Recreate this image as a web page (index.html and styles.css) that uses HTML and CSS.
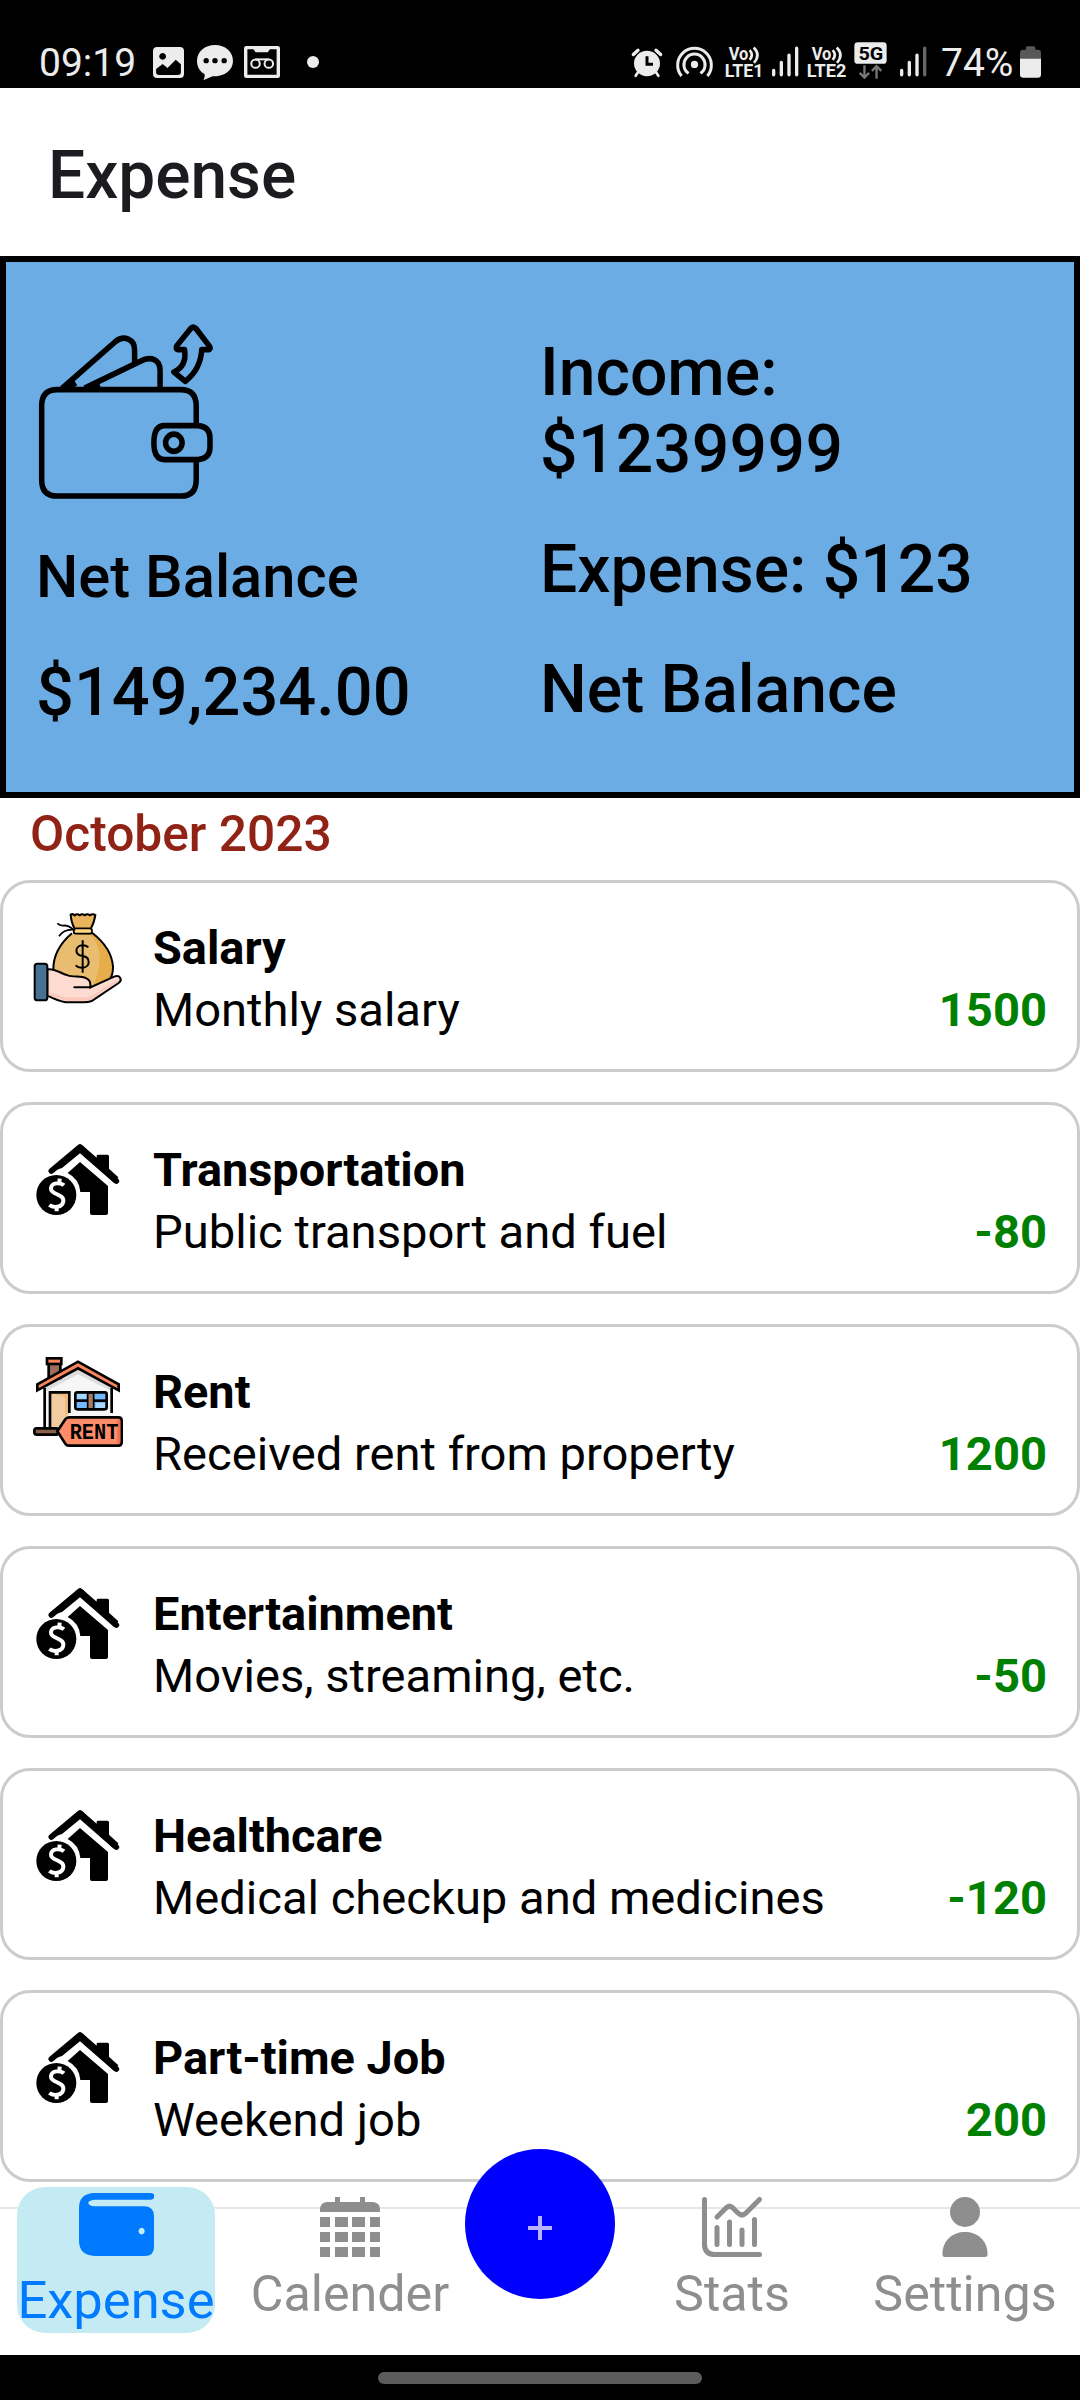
FILE: index.html
```html
<!DOCTYPE html>
<html lang="en">
<head>
<meta charset="utf-8">
<title>Expense</title>
<link rel="stylesheet" href="styles.css">
</head>
<body>
<svg class="defs" width="0" height="0" aria-hidden="true">
  <symbol id="house" viewBox="99 105 270 270">
    <path d="M154 213 L240 141 L349 243" fill="none" stroke="#000" stroke-width="17" stroke-linecap="round" stroke-linejoin="round"/>
    <path d="M147 216 L236 136 Q241 132 247 136 L290 173 V168 Q290 164 295 164 H322 Q327 164 327 169 V206 L355 232 L343 250 L240 160 L186 204 Q164 212 147 216Z"/>
    <path d="M203 219 L240 186 L324 258 V339 Q324 345 318 345 H276 Q270 345 270 339 V276 H241 Q238 237 203 219Z"/>
    <ellipse cx="169" cy="285" rx="60" ry="60"/>
    <path d="M192 256 C181 246 153 247 153 266 C153 285 192 281 190 303 C188 325 158 323 148 315 M179 236 L178 248 M170 322 L170 334" fill="none" stroke="#fff" stroke-width="12"/>
  </symbol>
</svg>

<header class="status">
  <span class="clock">09:19</span>
  <svg class="st-image" viewBox="444 141 90 93" preserveAspectRatio="none"><path fill="#ececec" fill-rule="evenodd" d="M456 141H522Q534 141 534 153V222Q534 234 522 234H456Q444 234 444 222V153Q444 141 456 141ZM453 207V219Q454 225 462 225H516Q525 225 525 217V193L510 179L486 204L472 192ZM472 159a10 10 0 1 0 .1 0Z"/></svg>
  <svg class="st-chat" viewBox="572 135 106 105" preserveAspectRatio="none"><path fill="#ececec" d="M625 135C655 135 678 155 678 182C678 210 655 229 618 229L592 240C590 239 597 232 594 222C580 214 572 200 572 182C572 155 595 135 625 135Z"/><circle cx="599" cy="182" r="8"/><circle cx="625" cy="182" r="8"/><circle cx="652" cy="182" r="8"/></svg>
  <svg class="st-tape" viewBox="709 139 106 96" preserveAspectRatio="none"><g fill="none" stroke="#ececec"><rect x="714" y="144" width="96" height="86" rx="2" stroke-width="10"/><circle cx="743" cy="192" r="12.500" stroke-width="6"/><circle cx="782" cy="192" r="12.500" stroke-width="6"/><path d="M743 179H782" stroke-width="6"/></g><path fill="#ececec" d="M736 147H786L779 158H743Z"/></svg>
  <i class="dot"></i>
  <div class="status-right">
    <svg class="st-alarm" viewBox="95 83 90 86"><ellipse cx="140" cy="129" rx="39" ry="38" fill="#ececec"/><path d="M99 102L113 89M181 102L167 89" stroke="#ececec" stroke-width="10" stroke-linecap="round"/><path d="M112 157L106 166M168 157L174 166" stroke="#ececec" stroke-width="8" stroke-linecap="round"/><path d="M140 107V131H158" fill="none" stroke="#000" stroke-width="9"/></svg>
    <svg class="st-hotspot" viewBox="226 74 112 98"><circle cx="282" cy="132" r="11" fill="#ececec"/><path d="M264 159A32 32 0 1 1 300 159M243 167A51 51 0 1 1 321 167" fill="none" stroke="#ececec" stroke-width="9"/></svg>
    <svg class="st-volte" viewBox="374 78 120 98"><g fill="#ececec" font-family="Roboto" font-weight="700"><text x="385" y="121" font-size="54" textLength="59" lengthAdjust="spacingAndGlyphs">Vo</text><text x="373" y="172" font-size="53" textLength="116" lengthAdjust="spacingAndGlyphs">LTE1</text></g><path d="M448 90Q461 104 448 119M460 82Q482 104 461 128" fill="none" stroke="#ececec" stroke-width="8"/></svg>
    <svg class="st-signal" viewBox="514 78 84 92"><path d="M522 151V164M545 127V164M568 105V164M591 84V164" stroke="#ececec" stroke-width="10" stroke-linecap="round"/></svg>
    <svg class="st-volte2" viewBox="623 78 120 98"><g fill="#ececec" font-family="Roboto" font-weight="700"><text x="637" y="121" font-size="54" textLength="59" lengthAdjust="spacingAndGlyphs">Vo</text><text x="622" y="172" font-size="53" textLength="119" lengthAdjust="spacingAndGlyphs">LTE2</text></g><path d="M700 90Q713 104 700 119M712 82Q734 104 713 128" fill="none" stroke="#ececec" stroke-width="8"/></svg>
    <svg class="st-5g" viewBox="764 65 98 113"><rect x="765" y="66" width="96" height="64" rx="10" fill="#ececec"/><text x="777" y="119" font-family="Roboto" font-weight="700" font-size="57" textLength="74" lengthAdjust="spacingAndGlyphs">5G</text><path d="M795 134V170M781 157L795 171L809 157M831 174V138M817 151L831 137L845 151" fill="none" stroke="#777" stroke-width="7"/></svg>
    <svg class="st-signal2" viewBox="898 78 84 92"><path d="M906 151V164M929 127V164M952 105V164" stroke="#ececec" stroke-width="10" stroke-linecap="round"/><path d="M975 84V164" stroke="#666" stroke-width="10" stroke-linecap="round"/></svg>
    <span class="percent">74%</span>
    <svg class="st-battery" viewBox="1260 79 63 95"><path fill="#585858" d="M1278 84Q1278 79 1283 79H1301Q1306 79 1306 84V90H1314Q1323 90 1323 99V120H1260V99Q1260 90 1269 90H1278Z"/><path fill="#ececec" d="M1260 117H1323V164Q1323 174 1313 174H1270Q1260 174 1260 164Z"/></svg>
  </div>
</header>

<h1 class="title">Expense</h1>

<section class="summary">
  <div class="col">
    <svg class="wallet" viewBox="104.500 199 523 504" preserveAspectRatio="none"><g fill="none" stroke="#000" stroke-width="16" stroke-linejoin="round">
      <path d="M570 490V436Q570 391 525 391H166Q121 391 121 436V644Q121 689 166 689H525Q570 689 570 644V592"/>
      <path d="M478 492H576Q610 495 610 527V553Q610 583 576 587H478Q447 587 447 540Q447 492 478 492Z"/>
      <circle cx="505" cy="540" r="24"/>
      <path d="M180 388L336 256C360 238 391 250 391 280V316M246 387L407 312C438 296 465 307 465 337V388M196 388L220 372M262 388L290 378"/>
      <path d="M555 219L513 269Q510 277 516 279H536Q544 325 505 342L538 368Q583 334 586 279H608Q613 276 608 269L570 221Q562 213 555 219Z"/>
    </g></svg>
    <p class="label">Net Balance</p>
    <p class="total">$149,234.00</p>
  </div>
  <div class="col figures">
    <p>Income: <span class="sum">$1239999</span></p>
    <p>Expense: $123</p>
    <p>Net Balance</p>
  </div>
</section>

<h2 class="month">October 2023</h2>

<main class="list">
  <article class="card">
    <svg class="icon" viewBox="39 39 270 270">
      <path d="M161 99L218 100Q275 145 279 200Q279 226 268 240L213 272L100 210Q99 148 161 99Z" fill="#e9bd70"/>
      <path d="M205 100C246 134 250 190 218 262L268 240C282 215 281 150 218 100Z" fill="#e7ad49"/>
      <path d="M152 44L226 44L213 84H163Z" fill="#e9b45c"/>
      <path d="M161 99L218 100Q275 145 279 200Q279 226 268 240M100 210Q99 148 156 100" fill="none" stroke="#000" stroke-width="6"/>
      <path d="M163 84Q154 68 152 44Q159 40 164 46Q172 40 179 46Q187 40 194 46Q202 40 209 46Q218 40 226 45Q222 69 213 84" fill="none" stroke="#000" stroke-width="6"/>
      <rect x="161" y="85" width="55" height="16" rx="7" fill="#ffda80" stroke="#000" stroke-width="5"/>
      <path d="M112 70Q121 79 135 76Q148 77 160 89Q132 87 117 109" fill="none" stroke="#000" stroke-width="5"/>
      <path d="M205 142Q199 136 188 136C163 137 163 165 188 168C213 172 211 202 188 203Q174 204 167 196M188 121V218" fill="none" stroke="#000" stroke-width="6"/>
      <path d="M82 208C105 204 120 220 143 226C168 234 210 223 211 253V262L284 229C299 224 309 239 296 249L215 303Q205 307 190 307H137Q115 303 82 287Z" fill="#fddbd0" stroke="#000" stroke-width="6"/>
      <path d="M86 276L136 292H190Q208 292 225 281L290 241L292 246L211 300Q200 303 139 303L86 285Z" fill="#fcc9bd"/>
      <path d="M163 262H211" stroke="#000" stroke-width="6" stroke-linecap="round"/>
      <rect x="44" y="191" width="38" height="110" rx="8" fill="#477193" stroke="#000" stroke-width="6"/>
    </svg>
    <div class="text"><h3>Salary</h3><p>Monthly salary</p></div><b class="amount">1500</b>
  </article>
  <article class="card">
    <svg class="icon"><use href="#house"/></svg>
    <div class="text"><h3>Transportation</h3><p>Public transport and fuel</p></div><b class="amount">-80</b>
  </article>
  <article class="card">
    <svg class="icon" viewBox="99 111 270 270">
      <path d="M134 202L234 149L335 202V334H134Z" fill="#f6f6f6"/>
      <path d="M134 202L234 149L335 202V214L234 163L134 216Z" fill="#ddd"/>
      <path d="M134 204V325M335 204V279" stroke="#000" stroke-width="8"/>
      <rect x="146" y="130" width="35" height="44" fill="#9c6d58" stroke="#000" stroke-width="8"/>
      <path d="M112 193L234 125L356 193V211L234 145L112 211Z" fill="#f9855c" stroke="#000" stroke-width="8"/>
      <rect x="141" y="115" width="43" height="17" fill="#f9855c" stroke="#000" stroke-width="8"/>
      <path d="M150 325V217H208V279L180 325Z" fill="#f2cca0"/><path d="M170 221H204V278L196 290V240Q194 224 170 225Z" fill="#efb878"/>
      <path d="M150 325V217H208V279" fill="none" stroke="#000" stroke-width="8"/>
      <rect x="226" y="217" width="94" height="51" rx="6" fill="#70b8ff"/><path d="M230 221h28v15h-28zM287 248h28v16h-28z" fill="#a5d7ff"/><path d="M226 242H320" stroke="#000" stroke-width="8"/><rect x="263" y="218" width="18" height="50" fill="#a77b61" stroke="#000" stroke-width="5"/><rect x="226" y="217" width="94" height="51" rx="6" fill="none" stroke="#000" stroke-width="8"/>
      <rect x="103" y="325" width="72" height="19" rx="7" fill="#88614d" stroke="#000" stroke-width="8"/>
      <path d="M172 334L196 298Q200 292 207 292H355Q365 292 365 302V367Q365 377 355 377H207Q200 377 196 371Z" fill="#ff8d69" stroke="#000" stroke-width="8"/>
      <path d="M352 296H356Q361 297 361 303V366Q361 373 352 373Z" fill="#ee7050"/>
      <text x="209" y="356" font-family="Liberation Mono, monospace" font-weight="700" font-size="64" textLength="146" lengthAdjust="spacingAndGlyphs">RENT</text>
    </svg>
    <div class="text"><h3>Rent</h3><p>Received rent from property</p></div><b class="amount">1200</b>
  </article>
  <article class="card">
    <svg class="icon"><use href="#house"/></svg>
    <div class="text"><h3>Entertainment</h3><p>Movies, streaming, etc.</p></div><b class="amount">-50</b>
  </article>
  <article class="card">
    <svg class="icon"><use href="#house"/></svg>
    <div class="text"><h3>Healthcare</h3><p>Medical checkup and medicines</p></div><b class="amount">-120</b>
  </article>
  <article class="card">
    <svg class="icon"><use href="#house"/></svg>
    <div class="text"><h3>Part-time Job</h3><p>Weekend job</p></div><b class="amount">200</b>
  </article>
</main>

<nav class="tabs">
  <a class="tab active">
    <svg class="ic-wallet" viewBox="229 188 218 190" preserveAspectRatio="none"><path fill="#007aff" fill-rule="evenodd" d="M274 188H438A9.500 10 0 0 1 438 208H274Q256 210 256 218Q257 227 274 228H420Q447 230 447 257V350Q447 378 420 378H275Q229 376 229 332V232Q229 190 274 188ZM411 293a9 10 0 1 0 .1 0Z"/></svg>
    <span>Expense</span>
  </a>
  <a class="tab">
    <svg class="ic" viewBox="0 0 60 60"><path fill="#8e8e8e" d="M15 0h5v5h20V0h5v5h8q7 1 7 7v3H0v-3q0-6 7-7h8zM0 20h10v10H0zM15 20h13v10H15zM32 20h13v10H32zM50 20h10v10H50zM0 35h10v10H0zM15 35h13v10H15zM32 35h13v10H32zM50 35h10v10H50zM0 50h10v10H0zM15 50h13v10H15zM32 50h13v10H32zM50 50h10v10H50z"/></svg>
    <span>Calender</span>
  </a>
  <a class="fab"><svg class="plus" viewBox="0 0 24 24"><path d="M12 0V24M0 12H24" stroke="#b8b3ff" stroke-width="4"/></svg></a>
  <a class="tab">
    <svg class="ic" viewBox="0 0 60 60"><path fill="none" stroke="#8e8e8e" stroke-width="5" stroke-linecap="round" d="M2.500 2.500V48Q3 57 12 57.500H57.500M15 30.500V47.500M27.500 25V47.500M40 33V47.500M52.500 22.500V47.500M15 20L24 11Q27.500 7.500 31 11L36 16Q40 20 44 16L57.500 2.500"/></svg>
    <span>Stats</span>
  </a>
  <a class="tab">
    <svg class="ic" viewBox="0 0 60 60"><g fill="#8e8e8e"><circle cx="30" cy="15" r="15"/><path d="M7.500 58V56C8 43 18 35 30 35S52 43 52.500 56V58Q52.500 60 50 60H10Q7.500 60 7.500 58Z"/></g></svg>
    <span>Settings</span>
  </a>
</nav>
<footer class="system"><i class="handle"></i></footer>
</body>
</html>
```
FILE: styles.css
```css
* { box-sizing: border-box; }
body {
  margin: 0;
  width: 1080px;
  height: 2400px;
  display: flex;
  flex-direction: column;
  overflow: hidden;
  background: #fff;
  color: #000;
  font-family: Roboto, sans-serif;
}
h1, h2, h3, p { margin: 0; font-weight: inherit; font-size: inherit; }
svg { display: block; flex: none; overflow: visible; }
.defs { display: none; }

.status {
  height: 88px;
  flex: none;
  display: flex;
  align-items: flex-start;
  padding: 42px 39px 0 39px;
  background: #000;
  color: #ececec;
}
.clock, .percent { font-size: 39px; line-height: 46px; margin-top: -2px; }
.clock { width: 114px; }
.st-image { width: 31px; height: 31px; margin-top: 5px; }
.st-chat { width: 36px; height: 35px; margin: 3px 0 0 13px; }
.st-tape { width: 36px; height: 32px; margin: 4px 0 0 11px; }
.dot { width: 12px; height: 12px; margin: 14px 0 0 27px; border-radius: 50%; background: #ececec; }
.status-right { display: flex; align-items: flex-start; margin-left: auto; }
.st-alarm { width: 30px; height: 29px; margin: 6px 14px 0 0; }
.st-hotspot { width: 37px; height: 33px; margin: 3px 12px 0 0; }
.st-volte { width: 40px; height: 33px; margin: 4px 6px 0 0; }
.st-signal { width: 28px; height: 31px; margin: 4px 8px 0 0; }
.st-volte2 { width: 40px; height: 33px; margin: 4px 7px 0 0; }
.st-5g { width: 33px; height: 38px; margin-right: 12px; }
.st-signal2 { width: 28px; height: 31px; margin: 4px 14px 0 0; }
.percent { width: 79px; }
.st-battery { width: 21px; height: 32px; margin-top: 4px; }

.title {
  height: 168px;
  flex: none;
  padding-left: 48px;
  font-size: 65.800px;
  font-weight: 500;
  line-height: 175px;
  color: #1c1b1f;
}

.summary {
  height: 542px;
  flex: none;
  display: grid;
  grid-template-columns: 1fr 1fr;
  padding: 0 30px;
  border: 6px solid #000;
  background: #6cace4;
  font-weight: 500;
}
.col { padding-top: 59px; }
.wallet { width: 180px; height: 180px; margin-bottom: 41px; }
.label { font-size: 59.700px; line-height: 70px; margin-bottom: 41px; }
.total { font-size: 66.700px; line-height: 78px; }
.figures { display: flex; flex-direction: column; gap: 43px; padding-top: 72px; font-size: 66px; line-height: 77px; }
.figures p { max-width: 450px; }
.sum { letter-spacing: 0.4px; }

.month {
  height: 82px;
  flex: none;
  padding-left: 30px;
  font-size: 49.700px;
  font-weight: 500;
  line-height: 73px;
  color: #902216;
}

.list { display: flex; flex-direction: column; gap: 30px; flex: 1; min-height: 0; }
.card {
  height: 192px;
  flex: none;
  display: flex;
  padding: 30px;
  border: 3px solid #ccc;
  border-radius: 30px;
  font-size: 47.150px;
  line-height: 63px;
}
.icon { width: 90px; height: 90px; margin-right: 30px; }
.text { flex: 1; padding-top: 3px; }
.text h3 { font-size: 46.900px; font-weight: 700; }
.amount { align-self: flex-end; margin-bottom: -3px; font-weight: 700; color: #008000; }

.tabs {
  height: 148px;
  flex: none;
  display: grid;
  grid-template-columns: 232px 236px 144px 240px 226px;
  justify-items: center;
  align-items: start;
  border-top: 2px solid #e7e7e7;
  color: #8e8e8e;
  font-size: 50.200px;
}
.tab { display: flex; flex-direction: column; align-items: center; margin-top: -12px; }
.tab span { line-height: 60px; margin-top: 7px; }
.ic { width: 60px; height: 60px; }
.active {
  width: 198px;
  height: 146px;
  margin-top: -22px;
  padding-top: 6px;
  border-radius: 28px;
  background: #c4ebf4;
  color: #007aff;
  font-size: 52.500px;
}
.active span { margin-top: 14px; }
.ic-wallet { width: 75px; height: 63px; }
.fab {
  width: 150px;
  height: 150px;
  margin: -60px -3px 0;
  display: flex;
  align-items: center;
  justify-content: center;
  padding-top: 7px;
  border-radius: 50%;
  background: #00f;
}
.plus { width: 24px; height: 24px; }

.system { height: 45px; flex: none; display: flex; justify-content: center; padding-top: 17px; background: #000; }
.handle { width: 324px; height: 12px; border-radius: 6px; background: #5c5c5c; }
```
